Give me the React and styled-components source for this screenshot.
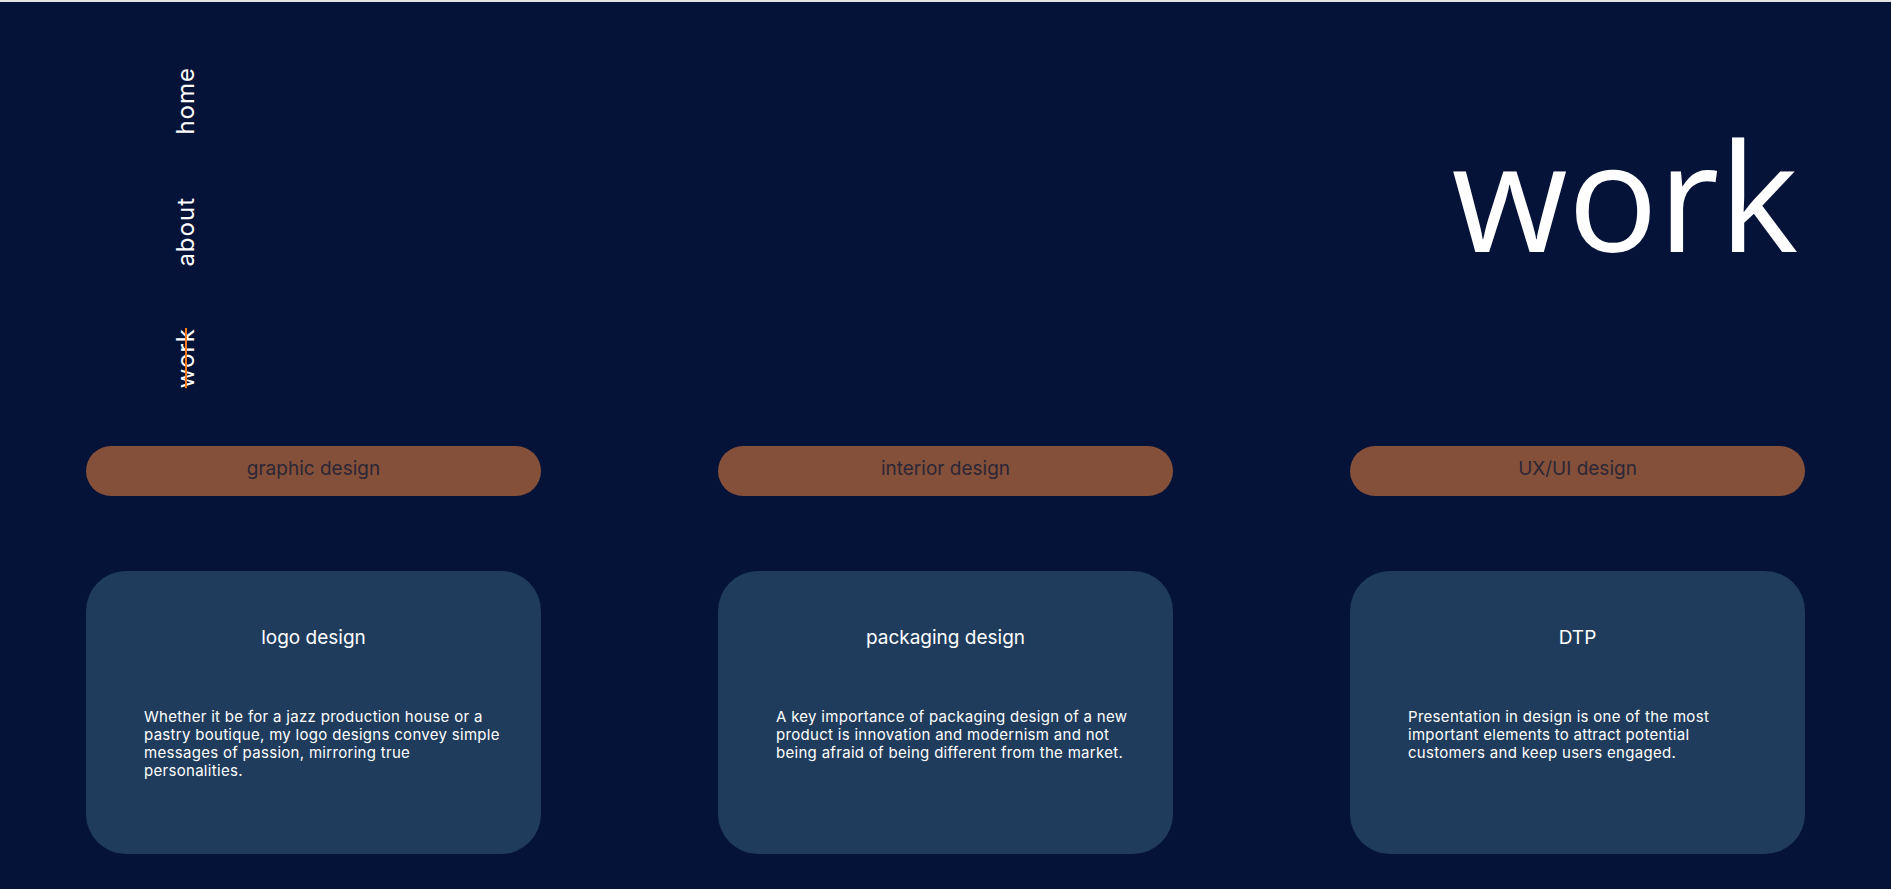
import React from "react";
import styled, { createGlobalStyle } from "styled-components";

const GlobalStyle = createGlobalStyle`
html, body {
margin: 0;
padding: 0;
background-color: #061339;
}
* {
box-sizing: border-box;
}
`

const Page = styled.div`
min-height: 100vh;
background-color: #061339;
border-top: 2px solid #e4e4e4;
padding: 0 86px;
font-family: "Inter", "Open Sans", sans-serif;
color: #ffffff;
`
const Header = styled.header`
display: flex;
justify-content: space-between;
align-items: flex-start;
padding-top: 65px;
`
const Nav = styled.nav`
display: flex;
flex-direction: column;
gap: 62px;
margin-left: 85px;
`
const NavLink = styled.a`
writing-mode: vertical-rl;
transform: rotate(180deg);
font-size: 24px;
line-height: 30px;
letter-spacing: 1px;
color: #ffffff;
text-decoration: ${props => props.$active ? "line-through #ff7a1a" : "none"};
text-decoration-thickness: 2px;
cursor: pointer;
`
const Title = styled.h1`
margin: 52px 7px 0 0;
font-family: "Open Sans", sans-serif;
font-weight: 400;
font-size: 150px;
line-height: 1;
color: #ffffff;
`
const Grid = styled.section`
display: grid;
grid-template-columns: repeat(3, 455px);
column-gap: 177px;
row-gap: 75px;
margin-top: 58px;
`
const Pill = styled.div`
height: 50px;
border-radius: 25px;
background-color: #845039;
color: #2c2636;
font-size: 19px;
display: flex;
justify-content: center;
padding-top: 11px;
`
const Card = styled.div`
height: 283px;
border-radius: 40px;
background-color: #203c5c;
padding: 55px 30px 0 58px;
`
const CardTitle = styled.h3`
margin: 0 0 0 -28px;
text-align: center;
font-size: 19px;
font-weight: 400;
`
const CardText = styled.p`
margin: 59px 0 0 0;
max-width: 360px;
font-size: 15px;
line-height: 18px;
letter-spacing: 0.3px;
`

const services = [
    {
        category: "graphic design",
        title: "logo design",
        text: "Whether it be for a jazz production house or a pastry boutique, my logo designs convey simple messages of passion, mirroring true personalities."
    },
    {
        category: "interior design",
        title: "packaging design",
        text: "A key importance of packaging design of a new product is innovation and modernism and not being afraid of being different from the market."
    },
    {
        category: "UX/UI design",
        title: "DTP",
        text: "Presentation in design is one of the most important elements to attract potential customers and keep users engaged."
    }
]

function App(){
    return(
        <>
            <GlobalStyle/>
            <Page>
                <Header>
                    <Nav>
                        <NavLink>home</NavLink>
                        <NavLink>about</NavLink>
                        <NavLink $active>work</NavLink>
                    </Nav>
                    <Title>work</Title>
                </Header>

                <Grid>
                    {services.map(s => <Pill key={s.category}>{s.category}</Pill>)}
                    {services.map(s => (
                        <Card key={s.title}>
                            <CardTitle>{s.title}</CardTitle>
                            <CardText>{s.text}</CardText>
                        </Card>
                    ))}
                </Grid>
            </Page>
        </>
    )
}

export default App
